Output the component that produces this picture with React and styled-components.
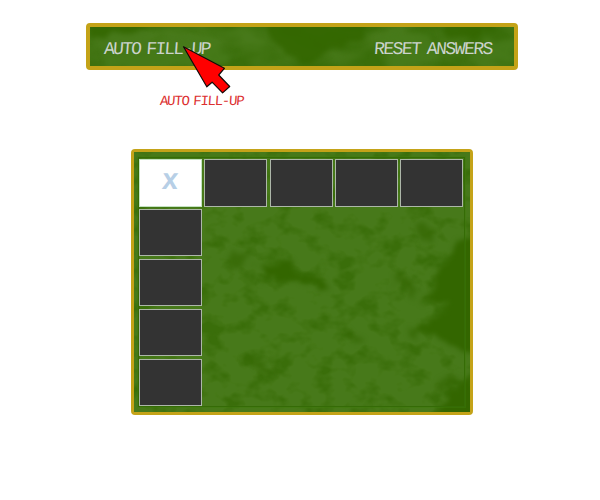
import React from "react";
import styled, { createGlobalStyle } from "styled-components";

const GlobalStyle = createGlobalStyle`
  * { box-sizing: border-box; }
  body { margin: 0; background: #fff; overflow: hidden; }
`;

const Page = styled.main`
  width: 600px;
  height: 500px;
  padding-top: 23px;
  background: #fff;
  font-family: "Liberation Mono", monospace;
`;

const Board = styled.section`
  position: relative;
  border: ${(p) => p.$edge}px solid #c4a318;
  border-radius: 4px;
  background: #336600;
`;

const Toolbar = styled(Board)`
  width: 432px;
  height: 47px;
  margin-left: 86px;
  padding: 4px 21px 0 14px;
  display: flex;
  align-items: center;
  justify-content: space-between;
`;

const Panel = styled(Board)`
  width: 342px;
  height: 266px;
  margin: 38px 0 0 131px;
  padding: 5px 4px;
`;

const Texture = styled.svg`
  position: absolute;
  inset: 0;
  width: 100%;
  height: 100%;
  display: block;
`;

const ChalkButton = styled.button`
  position: relative;
  height: 24px;
  width: ${(p) => p.$width}px;
  padding: 0;
  border: 0;
  background: none;
  color: #cbd3cc;
  font: 18px/24px "Liberation Mono", monospace;
  letter-spacing: ${(p) => p.$spacing}px;
  word-spacing: -3px;
  text-align: left;
  white-space: nowrap;
  transform: skewX(-4deg);
`;

const Hint = styled.div`
  width: 90px;
  height: 20px;
  margin: 21px 0 0 160px;
  color: #dc3030;
  font-size: 14px;
  line-height: 20px;
  letter-spacing: -1.25px;
  word-spacing: -2.5px;
  white-space: nowrap;
  transform: skewX(-4deg);
`;

const Table = styled.div`
  position: relative;
  width: 327px;
  height: 250px;
  padding: 1px 0 0;
  border: 1px solid #356b06;
  box-shadow: 0 0 0 1px #3f7d0b66;
  display: grid;
  grid-template-columns: repeat(5, 63px);
  grid-template-rows: repeat(5, 47.5px);
  column-gap: 2.25px;
  row-gap: 2.4px;
`;

const Cell = styled.div`
  grid-column: ${(p) => p.$col};
  grid-row: ${(p) => p.$row};
  display: flex;
  align-items: center;
  justify-content: center;
  border: 1px solid ${(p) => (p.$corner ? "#c4e2c2" : "#adb7a9")};
  background: ${(p) => (p.$corner ? "#fff" : "#333")};
`;

const Cross = styled.span`
  color: #b7cfe6;
  font: bold 30px/30px "Liberation Sans", sans-serif;
  transform: translateY(-4px) skewX(-5deg) scaleX(0.95);
`;

const Pointer = styled.svg`
  position: absolute;
  left: 182px;
  top: 45px;
`;

function Chalk({ id, frequency, seed, slope, offset, children }) {
  return (
    <Texture aria-hidden="true">
      <defs>
        <filter id={id} x="0" y="0" width="100%" height="100%" colorInterpolationFilters="sRGB">
          <feTurbulence type="fractalNoise" baseFrequency={frequency} numOctaves="3" seed={seed} />
          <feColorMatrix values={`0 0 0 0 .28  0 0 0 0 .475  0 0 0 0 .1  ${slope} 0 0 0 ${offset}`} />
          <feGaussianBlur stdDeviation=".7" />
        </filter>
        <filter id={`${id}-soft`} x="-20%" y="-20%" width="140%" height="140%" colorInterpolationFilters="sRGB">
          <feTurbulence type="fractalNoise" baseFrequency=".055" numOctaves="3" seed="8" />
          <feDisplacementMap in="SourceGraphic" scale="24" xChannelSelector="R" yChannelSelector="G" />
          <feGaussianBlur stdDeviation="2.5" />
        </filter>
      </defs>
      <rect width="100%" height="100%" fill="#477a1a" fillOpacity=".4" />
      <rect width="100%" height="100%" filter={`url(#${id})`} />
      <g filter={`url(#${id}-soft)`}>{children}</g>
    </Texture>
  );
}

const columns = [2, 3, 4, 5];

export default function App() {
  return (
    <>
      <GlobalStyle />
      <Page>
        <Toolbar $edge={4}>
          <Chalk id="bar" frequency=".017 .03" seed="5" slope="3" offset="-1.1">
            <path d="M0 -5H65L38 8L0 14ZM170 -5H282L269 15L244 24L218 40L197 31L187 15ZM352 -4H405L381 15L362 9Z" fill="#336600" fillOpacity=".88" />
            <path d="M14 25L65 15L105 11L150 25L130 40H14ZM285 7L340 5L350 31L300 39ZM391 10L425 11V37H383Z" fill="#477a1a" fillOpacity=".85" />
          </Chalk>
          <ChalkButton $width={108} $spacing={-1.75}>AUTO FILL-UP</ChalkButton>
          <ChalkButton $width={119} $spacing={-1.5}>RESET ANSWERS</ChalkButton>
        </Toolbar>
        <Hint>AUTO FILL-UP</Hint>
        <Panel $edge={3}>
          <Chalk id="panel" frequency=".045 .06" seed="14" slope="3.5" offset="-.85">
            <path d="M324 90L344 76V210L318 192L286 178L302 164L316 152L289 147L300 132ZM125 117L149 109L182 122L194 135L171 135L151 127L132 130ZM311 245L344 215V270H303Z" fill="#336600" />
            <path d="M285 70L304 74L300 92L286 87ZM99 98L115 103L109 116L97 112ZM257 123L275 126L284 143L263 137ZM278 174L290 178L285 190L275 187ZM207 178L225 184L232 194L216 192ZM107 204L129 209L141 221L119 216ZM218 253L232 254L225 264ZM304 224L319 227L312 238L300 234Z" fill="#336600" fillOpacity=".65" />
          </Chalk>
          <Table>
            <Cell $corner $col={1} $row={1}><Cross>x</Cross></Cell>
            {columns.map((n) => <Cell key={`top-${n}`} $col={n} $row={1} />)}
            {columns.map((n) => <Cell key={`side-${n}`} $col={1} $row={n} />)}
          </Table>
        </Panel>
        <Pointer width="51" height="51" viewBox="0 0 51 51" aria-hidden="true">
          <path d="M1.5 1.8L42.4 23.3L36.7 30L47.7 41.5L40.6 47.9L30.1 37.2L24.8 41.8Z" fill="#f00" stroke="#100b08" strokeWidth="1.2" strokeLinejoin="round" />
        </Pointer>
      </Page>
    </>
  );
}
